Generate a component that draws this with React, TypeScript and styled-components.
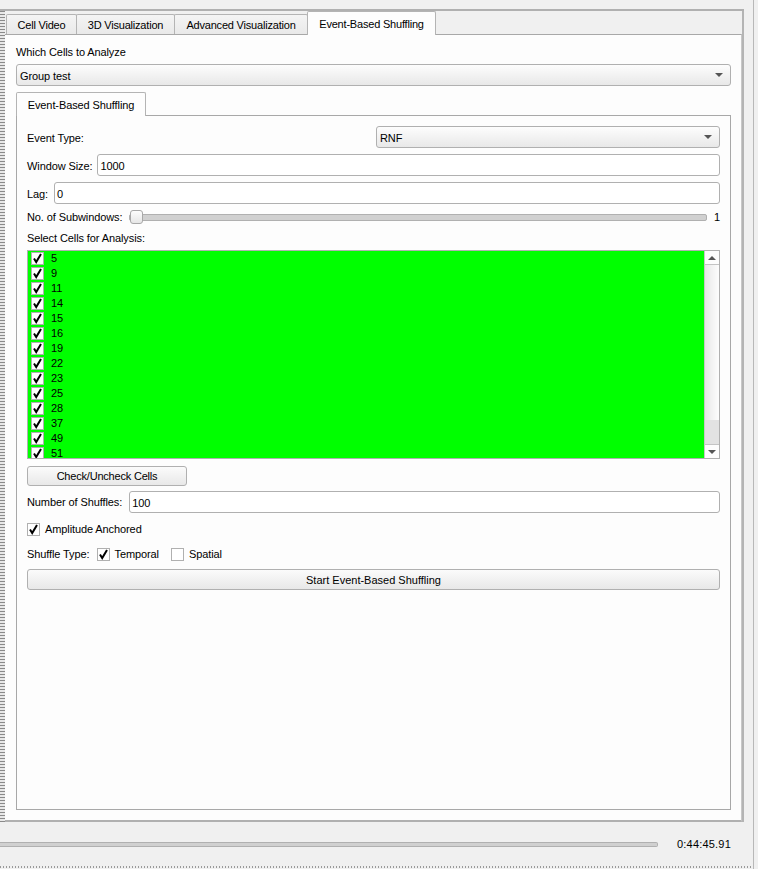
import styled, { createGlobalStyle } from "styled-components";

const CELLS = ["5", "9", "11", "14", "15", "16", "19", "22", "23", "25", "28", "37", "49", "51"];
const TABS = [
  { label: "Cell Video", width: 71 },
  { label: "3D Visualization", width: 99 },
  { label: "Advanced Visualization", width: 134 },
];

const GlobalStyle = createGlobalStyle`
  html, body {
    margin: 0;
    padding: 0;
    background: #f0f0f0;
  }
  body {
    font-family: "Liberation Sans", Arial, sans-serif;
    font-size: 11px;
    letter-spacing: -0.1px;
    color: #000;
  }
`;

function Check({ on = true }: { on?: boolean }) {
  return (
    <CheckBox>
      {on && (
        <svg width="11" height="11" viewBox="0 0 11 11">
          <path d="M2 5.5 L4.2 9 L9 1" fill="none" stroke="#000" strokeWidth="2" />
        </svg>
      )}
    </CheckBox>
  );
}

function Arrow({ up }: { up?: boolean }) {
  return (
    <svg width="8" height="4" viewBox="0 0 8 4">
      <path d={up ? "M4 0 L8 4 L0 4 Z" : "M0 0 L8 0 L4 4 Z"} fill="#555" />
    </svg>
  );
}

export default function App() {
  return (
    <Page>
      <GlobalStyle />
      <Window>
        <TopStrip />
        <Middle>
          <DotStrip />
          <TabWidget>
            <TabBar>
              {TABS.map((t) => (
                <Tab key={t.label} $width={t.width}>
                  {t.label}
                </Tab>
              ))}
              <ActiveTab $width={129}>Event-Based Shuffling</ActiveTab>
            </TabBar>
            <Pane>
              <PaneLabel>Which Cells to Analyze</PaneLabel>
              <Combo>
                <ComboText>Group test</ComboText>
                <Arrow />
              </Combo>
              <InnerTabBar>
                <InnerTab>Event-Based Shuffling</InnerTab>
              </InnerTabBar>
              <InnerPane>
                <EventRow>
                  <FieldLabel>Event Type:</FieldLabel>
                  <EventCombo>
                    <ComboText>RNF</ComboText>
                    <Arrow />
                  </EventCombo>
                </EventRow>
                <FieldRow $gap={5}>
                  <FieldLabel>Window Size:</FieldLabel>
                  <Input>1000</Input>
                </FieldRow>
                <FieldRow $gap={6}>
                  <FieldLabel>Lag:</FieldLabel>
                  <Input>0</Input>
                </FieldRow>
                <SliderRow>
                  <Label>No. of Subwindows:</Label>
                  <Groove>
                    <Handle />
                  </Groove>
                  <SliderValue>1</SliderValue>
                </SliderRow>
                <ListLabel>Select Cells for Analysis:</ListLabel>
                <CellList>
                  <CellRows>
                    {CELLS.map((c) => (
                      <CellRow key={c}>
                        <Check />
                        <CellText>{c}</CellText>
                      </CellRow>
                    ))}
                  </CellRows>
                  <ScrollBar>
                    <ScrollButton $top>
                      <Arrow up />
                    </ScrollButton>
                    <ScrollTrack>
                      <ScrollThumb />
                    </ScrollTrack>
                    <ScrollButton>
                      <Arrow />
                    </ScrollButton>
                  </ScrollBar>
                </CellList>
                <SmallButton>Check/Uncheck Cells</SmallButton>
                <ShufflesRow $gap={7}>
                  <Label>Number of Shuffles:</Label>
                  <Input>100</Input>
                </ShufflesRow>
                <CheckRow>
                  <Check />
                  <span>Amplitude Anchored</span>
                </CheckRow>
                <TypeRow>
                  <Label>Shuffle Type:</Label>
                  <Option>
                    <Check />
                    <span>Temporal</span>
                  </Option>
                  <Option>
                    <Check on={false} />
                    <span>Spatial</span>
                  </Option>
                </TypeRow>
                <WideButton>Start Event-Based Shuffling</WideButton>
              </InnerPane>
            </Pane>
          </TabWidget>
        </Middle>
        <Footer>
          <FooterGroove />
          <Time>0:44:45.91</Time>
        </Footer>
        <Dots />
      </Window>
    </Page>
  );
}

const Page = styled.div`
  width: 758px;
  height: 869px;
  overflow: hidden;
  background: #f0f0f0;
`;

const Window = styled.div`
  width: 754px;
  height: 869px;
  box-sizing: border-box;
  display: flex;
  flex-direction: column;
  border-right: 1px solid #b8b8b8;
`;

const TopStrip = styled.div`
  width: 744px;
  height: 9px;
  flex: none;
  border-bottom: 2px solid #b0b0b0;
`;

const Middle = styled.div`
  display: flex;
  height: 811px;
  flex: none;
`;

const DotStrip = styled.div`
  width: 5px;
  flex: none;
  background: repeating-linear-gradient(to bottom, #8a8a8a 0 1px, #e8e8e8 1px 3px);
`;

const TabWidget = styled.div`
  width: 739px;
  flex: none;
  box-sizing: border-box;
  display: flex;
  flex-direction: column;
  border-right: 2px solid #b4b4b4;
`;

const TabBar = styled.div`
  display: flex;
  height: 24px;
  flex: none;
  align-items: flex-end;
  padding-left: 1px;
`;

const Tab = styled.div<{ $width: number }>`
  width: ${(p) => p.$width}px;
  height: 21px;
  flex: none;
  box-sizing: border-box;
  display: flex;
  align-items: center;
  justify-content: center;
  letter-spacing: -0.2px;
  background: linear-gradient(#f4f4f4, #e9e9e9);
  border: 1px solid #b4b4b4;
  border-bottom: 1px solid #a8a8a8;
  border-radius: 2px 2px 0 0;
  margin-right: -1px;
  white-space: nowrap;
`;

const ActiveTab = styled(Tab)`
  height: 24px;
  background: #fdfdfd;
  border-bottom: none;
  position: relative;
  z-index: 1;
`;

const Pane = styled.div`
  flex: 1;
  display: flex;
  flex-direction: column;
  box-sizing: border-box;
  background: #fdfdfd;
  border-top: 1px solid #a8a8a8;
  border-right: 1px solid #c8c8c8;
  border-bottom: 2px solid #b0b0b0;
  margin-top: -1px;
  padding: 10px 10px 10px 11px;
`;

const Label = styled.span`
  white-space: nowrap;
  flex: none;
`;

const FieldLabel = styled(Label)`
  padding-top: 1px;
`;

const PaneLabel = styled(Label)`
  line-height: 14px;
`;

const Combo = styled.div`
  height: 22px;
  margin-top: 5px;
  flex: none;
  box-sizing: border-box;
  display: flex;
  align-items: center;
  justify-content: space-between;
  padding: 0 7px 0 3px;
  border: 1px solid #b0b0b0;
  border-radius: 3px;
  background: linear-gradient(#fdfdfd, #e8e8e8);
`;

const ComboText = styled.span`
  padding-top: 1px;
`;

const InnerTabBar = styled.div`
  display: flex;
  height: 23px;
  margin-top: 6px;
  flex: none;
`;

const InnerTab = styled.div`
  width: 130px;
  height: 24px;
  box-sizing: border-box;
  display: flex;
  align-items: center;
  justify-content: center;
  background: #fdfdfd;
  border: 1px solid #b4b4b4;
  border-bottom: none;
  border-radius: 2px 2px 0 0;
  position: relative;
  z-index: 1;
`;

const InnerPane = styled.div`
  flex: 1;
  display: flex;
  flex-direction: column;
  box-sizing: border-box;
  border: 1px solid #a8a8a8;
  padding: 10px 10px 0;
`;

const EventRow = styled.div`
  display: flex;
  height: 22px;
  align-items: center;
  flex: none;
`;

const EventCombo = styled(Combo)`
  margin: 0 0 0 auto;
  width: 344px;
`;

const FieldRow = styled.div<{ $gap: number }>`
  display: flex;
  height: 22px;
  align-items: center;
  gap: ${(p) => p.$gap}px;
  margin-top: 6px;
  flex: none;
`;

const Input = styled.div`
  flex: 1;
  height: 22px;
  box-sizing: border-box;
  display: flex;
  align-items: center;
  padding: 1px 3px 0 2px;
  background: #fff;
  border: 1px solid #b0b0b0;
  border-radius: 3px;
`;

const SliderRow = styled.div`
  display: flex;
  align-items: center;
  height: 14px;
  margin-top: 6px;
  flex: none;
`;

const Groove = styled.div`
  flex: 1;
  margin-left: 7px;
  height: 5px;
  display: flex;
  align-items: center;
  background: #d0d0d0;
  border: 1px solid #b0b0b0;
  border-radius: 2px;
`;

const Handle = styled.div`
  width: 13px;
  height: 14px;
  flex: none;
  box-sizing: border-box;
  border: 1px solid #a8a8a8;
  border-radius: 3px;
  background: linear-gradient(#fdfdfd, #e6e6e6);
`;

const SliderValue = styled.span`
  width: 13px;
  flex: none;
  text-align: right;
`;

const ListLabel = styled(Label)`
  line-height: 14px;
  margin-top: 7px;
`;

const CellList = styled.div`
  height: 209px;
  margin-top: 5px;
  flex: none;
  box-sizing: border-box;
  display: flex;
  background: #00ff00;
  border: 1px solid #b0b0b0;
  overflow: hidden;
`;

const CellRows = styled.div`
  flex: 1;
  overflow: hidden;
`;

const CellRow = styled.div`
  height: 15px;
  display: flex;
  align-items: center;
  gap: 7px;
  padding-left: 3px;
`;

const CellText = styled.span`
  padding-bottom: 1px;
`;

const CheckBox = styled.span`
  width: 13px;
  height: 13px;
  flex: none;
  box-sizing: border-box;
  display: flex;
  align-items: center;
  justify-content: center;
  background: #fff;
  border: 1px solid #b0b0b0;
`;

const ScrollBar = styled.div`
  width: 14px;
  flex: none;
  display: flex;
  flex-direction: column;
  border-left: 1px solid #c8c8c8;
  background: #fdfdfd;
`;

const ScrollButton = styled.div<{ $top?: boolean }>`
  height: 13px;
  flex: none;
  display: flex;
  align-items: center;
  justify-content: center;
  border-${(p) => (p.$top ? "bottom" : "top")}: 1px solid #c4c4c4;
`;

const ScrollTrack = styled.div`
  flex: 1;
  display: flex;
  flex-direction: column;
  justify-content: flex-end;
  background: linear-gradient(to right, #e8e8e8, #fdfdfd);
`;

const ScrollThumb = styled.div`
  height: 24px;
  background: #e2e2e2;
`;

const ButtonBase = styled.div`
  height: 20px;
  flex: none;
  box-sizing: border-box;
  display: flex;
  align-items: center;
  justify-content: center;
  border: 1px solid #b0b0b0;
  border-radius: 3px;
  background: linear-gradient(#fbfbfb, #e8e8e8);
`;

const SmallButton = styled(ButtonBase)`
  width: 160px;
  margin-top: 7px;
  letter-spacing: -0.2px;
`;

const ShufflesRow = styled(FieldRow)`
  margin-top: 5px;
`;

const CheckRow = styled.div`
  display: flex;
  align-items: center;
  gap: 5px;
  height: 14px;
  margin-top: 9px;
  flex: none;
`;

const TypeRow = styled.div`
  display: flex;
  align-items: center;
  height: 14px;
  margin-top: 11px;
  flex: none;
  gap: 7px;
`;

const Option = styled.div`
  display: flex;
  align-items: center;
  gap: 5px;
  margin-right: 5px;
`;

const WideButton = styled(ButtonBase)`
  height: 21px;
  margin-top: 8px;
  letter-spacing: 0;
`;

const Footer = styled.div`
  flex: 1;
  display: flex;
  align-items: center;
  padding-right: 22px;
  gap: 19px;
`;

const FooterGroove = styled.div`
  flex: 1;
  height: 3px;
  background: #d0d0d0;
  border: 1px solid #b0b0b0;
  border-left: none;
  border-radius: 0 2px 2px 0;
`;

const Time = styled.span`
  white-space: nowrap;
  letter-spacing: 0.2px;
`;

const Dots = styled.div`
  height: 2px;
  flex: none;
  margin-bottom: 1px;
  background: repeating-linear-gradient(to right, #9a9a9a 0 1px, #f0f0f0 1px 3px);
`;
